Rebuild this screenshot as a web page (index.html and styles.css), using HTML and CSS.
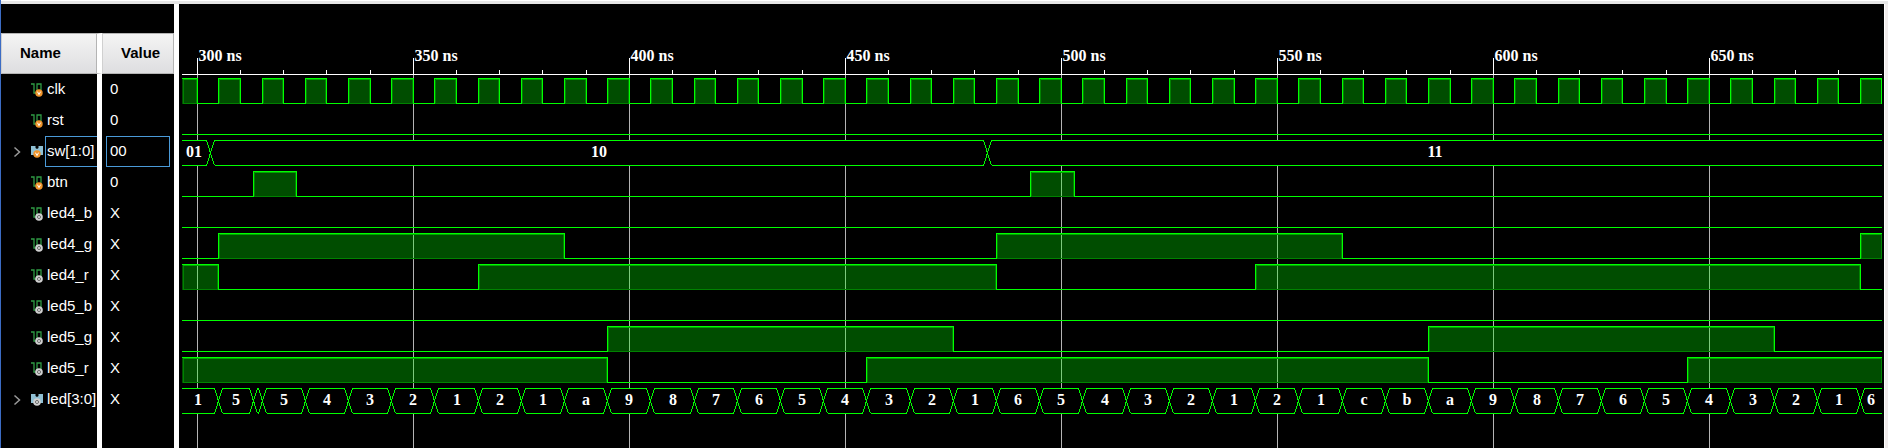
FILE: index.html
```html
<!DOCTYPE html>
<html lang="en">
<head>
<meta charset="utf-8">
<title>Waveform viewer</title>
<link rel="stylesheet" href="styles.css">
</head>
<body>
<svg class="defs" width="0" height="0" aria-hidden="true">
  <symbol id="scalar" viewBox="0 0 14 16">
    <path d="M1 2H4V11H7V2H11V8" fill="none" stroke="#2f9a44" stroke-width="1.300"/>
  </symbol>
  <symbol id="vector" viewBox="0 0 14 16">
    <path d="M1 2H5.500V4L7 5L8.500 4V2H13V11H1Z" fill="#8fbfd3"/>
  </symbol>
  <symbol id="badge-in" viewBox="0 0 8 8">
    <circle cx="4" cy="4" r="3.700" fill="#f0952c"/>
    <path d="M2.500 2.700L4 5.600L5.500 2.700" fill="none" stroke="#fff" stroke-width="1"/>
  </symbol>
  <symbol id="badge-out" viewBox="0 0 8 8">
    <circle cx="4" cy="4" r="3.800" fill="#d0d0d0"/>
    <circle cx="4" cy="4" r="1.500" fill="#eee" stroke="#666" stroke-width="1"/>
  </symbol>
</svg>
<main class="viewer">
  <section class="signals" aria-label="Signals">
    <table class="signal-table">
      <thead>
        <tr><th class="name-head" scope="col">Name</th><th class="value-head" scope="col">Value</th></tr>
      </thead>
      <tbody id="signal-rows"></tbody>
    </table>
    <div class="signals-rest"></div>
  </section>
  <section class="waves" id="waves" aria-label="Waveforms"></section>
</main>
<script src="waves.js"></script>
</body>
</html>
```
FILE: styles.css
```css
* {
  box-sizing: border-box;
}

body {
  display: flex;
  min-height: 100vh;
  margin: 0;
  padding-top: 1px;
  border-left: 1px solid #3c6cc4;
  background: #fff;
  font-family: "Liberation Sans", Arial, sans-serif;
  font-size: 15px;
  color: #fff;
}

.defs {
  position: absolute;
}

.viewer {
  flex: 1;
  min-width: 0;
  display: flex;
  gap: 5px;
  padding-right: 4px;
  border-top: 3px solid #e6e6e6;
  background: linear-gradient(to left, #f0ecec 3px, #fff 3px);
}

.signals {
  flex: none;
  display: flex;
  flex-direction: column;
  padding-top: 29px;
  background: #000;
}

.signal-table {
  width: 173px;
  table-layout: fixed;
  border-collapse: separate;
  border-spacing: 0;
}

.signal-table th {
  height: 41px;
  padding: 0 0 2px;
  border: 1px solid #b4b4b4;
  border-left-color: #d0d0d0;
  background: linear-gradient(#f4f4f4, #dedee0);
  color: #000;
  text-align: left;
}

.signal-table .name-head {
  width: 101px;
  padding-left: 18px;
  border-right: 5px solid #fff;
  background-clip: padding-box;
  box-shadow: inset -1px 0 #b4b4b4;
}

.signal-table .value-head {
  padding-left: 18px;
}

.signal-table td {
  height: 31px;
  padding: 0;
}

.name-cell {
  border-right: 5px solid #fff;
}

.name {
  display: flex;
  align-items: center;
  height: 31px;
}

.expander {
  width: 8px;
  height: 12px;
  margin: 0 9px 0 12px;
  padding: 0;
  border: 0;
  background: none;
  display: flex;
}

.no-expander {
  width: 29px;
}

.icon {
  width: 14px;
  height: 16px;
  flex: none;
}

.name-text {
  flex: 1;
  height: 31px;
  margin-left: 1px;
  padding-left: 2px;
  line-height: 29px;
  white-space: nowrap;
}

.value-text {
  height: 31px;
  margin: 0 4px;
  padding-left: 4px;
  line-height: 29px;
}

.selected .name-text {
  padding-left: 1px;
  border: 1px solid #4a9ad8;
  border-right: 0;
  line-height: 27px;
}

.selected .value-text {
  padding-left: 3px;
  border: 1px solid #4a9ad8;
  line-height: 27px;
}

.signals-rest {
  flex: 1;
  width: 101px;
  border-right: 5px solid #fff;
}

.waves {
  flex: 1;
  min-width: 0;
  overflow: hidden;
  background: #000;
}

.waves svg {
  display: block;
  shape-rendering: crispEdges;
}

.waves text {
  fill: #fff;
  font: bold 16px "Liberation Serif", "Times New Roman", serif;
}

.bus-label {
  text-anchor: middle;
}

.axis {
  stroke: #fff;
}

.grid-line {
  stroke: #b4b4b4;
}

.trace {
  fill: none;
  stroke: #00ff00;
}

.high {
  fill: rgba(0, 255, 0, 0.3);
}

.high-edge {
  fill: none;
  stroke: #008200;
}

.high-top {
  stroke: #00a500;
}

.bus-body {
  fill: #000;
}
```
FILE: waves.js
```js
// Scalars: initial level plus toggle times in ns. Buses: [start time, label].
const clockEdges = [];
for (let t = 300; t < 690; t += 5) clockEdges.push(t);

const signals = [
  { name: "clk", value: "0", dir: "in", start: 1, edges: clockEdges, closes: true },
  { name: "rst", value: "0", dir: "in", start: 0, edges: [] },
  { name: "sw[1:0]", value: "00", dir: "in", selected: true,
    bus: [[295.5, "01"], [303, "10"], [483, "11"]] },
  { name: "btn", value: "0", dir: "in", start: 0, edges: [313, 323, 493, 503] },
  { name: "led4_b", value: "X", dir: "out", start: 0, edges: [] },
  { name: "led4_g", value: "X", dir: "out", start: 0, edges: [305, 385, 485, 565, 685] },
  { name: "led4_r", value: "X", dir: "out", start: 1, edges: [305, 365, 485, 545, 685] },
  { name: "led5_b", value: "X", dir: "out", start: 0, edges: [] },
  { name: "led5_g", value: "X", dir: "out", start: 0, edges: [395, 475, 585, 665] },
  { name: "led5_r", value: "X", dir: "out", start: 1, edges: [395, 455, 585, 645] },
  { name: "led[3:0]", value: "X", dir: "out",
    bus: [[295.5, "1"], [305, "5"], [313, ""],
      ...[..."54321" + "21a987654321654321" + "21cba9876543216"]
        .map((label, i) => [315 + 10 * i, label])] },
];

const icon = s => `<svg class="icon" viewBox="0 0 14 16" aria-hidden="true">
  <use href="#${s.bus ? "vector" : "scalar"}" width="14" height="16"/>
  <use href="#badge-${s.dir}" x="${s.bus ? 3 : 5}" y="${s.bus ? 6 : 7}" width="8" height="8"/></svg>`;

const expander = s => s.bus
  ? `<button class="expander" type="button" aria-label="Expand ${s.name}"><svg width="8" height="12" viewBox="0 0 8 12"><path d="M1.500 1.500L6.500 6L1.500 10.500" fill="none" stroke="#9a9a9a" stroke-width="1.500"/></svg></button>`
  : `<span class="no-expander"></span>`;

document.getElementById("signal-rows").innerHTML = signals.map(s => `
  <tr${s.selected ? ' class="selected"' : ""}>
    <td class="name-cell"><div class="name">${expander(s)}${icon(s)}<span class="name-text">${s.name}</span></div></td>
    <td><div class="value-text">${s.value}</div></td>
  </tr>`).join("");

const NS = 4.32, ORIGIN = 18.22, ROW = 31, FIRST_TOP = 74, SWING = 25, LEFT = 3;
const xAt = t => Math.floor(ORIGIN + (t - 300) * NS) + 0.5;

function scalar(s, top, right) {
  const hi = top, lo = top + SWING;
  let level = s.start, from = LEFT, path = `M${LEFT} ${level ? hi : lo}`, out = "";
  const block = (a, b) => {
    out += `<rect class="high" x="${a}" y="${hi}" width="${b - a}" height="${SWING}"/>
      <path class="high-edge" d="M${a + 1} ${hi}V${lo}H${b - 1}V${hi}"/>
      <path class="high-top" d="M${a + 1} ${hi + 1}H${b - 1}"/>`;
  };
  for (const t of s.edges) {
    const x = xAt(t);
    if (x > right) break;
    if (level) block(from, x);
    level = 1 - level;
    path += `H${x}V${level ? hi : lo}`;
    from = x;
  }
  if (level) block(from, right);
  path += `H${right}`;
  if (level && s.closes) path += `M${right - 0.5} ${hi}V${lo}`;
  return `${out}<path class="trace" d="${path}"/>`;
}

function bus(s, top, right) {
  const hi = top, lo = top + SWING;
  let body = `<rect class="bus-body" x="${LEFT}" y="${hi}" width="${right - LEFT}" height="${SWING}"/>`;
  let path = "", labels = "";
  s.bus.forEach(([t, label], i) => {
    const a = i ? xAt(t) : LEFT;
    const last = i === s.bus.length - 1;
    const b = last ? right : xAt(s.bus[i + 1][0]);
    const l = i ? a + 4 : a, r = last ? b : b - 4;
    path += `M${l} ${hi}H${r}M${l} ${lo}H${r}`;
    if (i) path += `M${a - 4} ${hi}L${a + 4} ${lo}M${a - 4} ${lo}L${a + 4} ${hi}`;
    labels += `<text class="bus-label" x="${Math.round(((i ? a : xAt(t)) + b) / 2)}" y="${Math.floor(top) + 17}">${label}</text>`;
  });
  return `${body}<path class="trace" d="${path}"/>${labels}`;
}

function draw() {
  const host = document.getElementById("waves");
  host.innerHTML = "";
  const width = host.clientWidth, height = host.clientHeight, right = width - 2;
  let out = "";
  for (let t = 300; xAt(t) < right; t += 10) {
    const x = xAt(t), major = t % 50 === 0;
    if (major) {
      out += `<path class="grid-line" d="M${x} 71V${height}"/>
        <text x="${x + 1}" y="57">${t} ns</text>`;
    }
    out += `<path class="axis" d="M${x} ${major ? 54 : 66}V71"/>`;
  }
  out += `<path class="axis" d="M${LEFT} 70.500H${right}"/>`;
  signals.forEach((s, i) => {
    const top = FIRST_TOP + i * ROW + 0.5;
    out += s.bus ? bus(s, top, right) : scalar(s, top, right);
  });
  host.innerHTML = `<svg width="${width}" height="${height}" role="img" aria-label="Signal traces from 300 ns">${out}</svg>`;
}

draw();
addEventListener("resize", draw);
```
